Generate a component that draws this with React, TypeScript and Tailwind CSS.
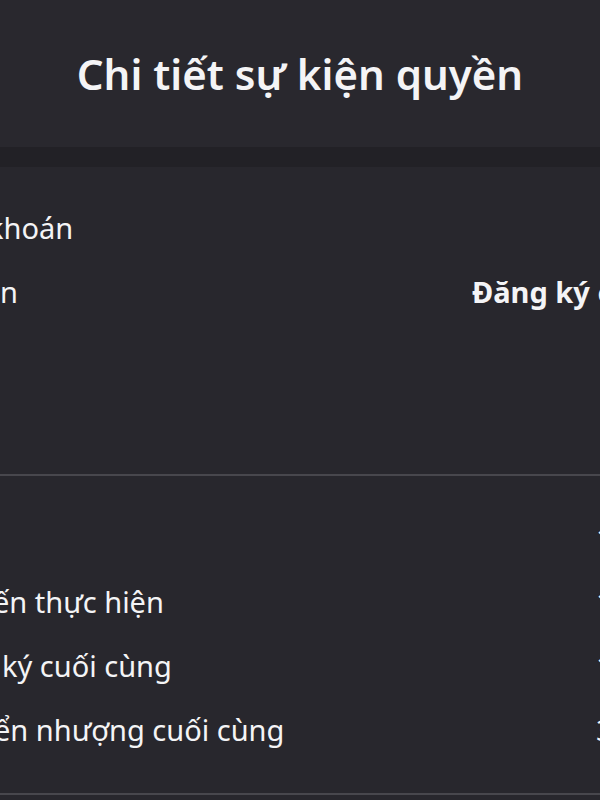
const topRows = [
  { label: "khoán", shift: "-ml-[12px]", value: "" },
  { label: "n", shift: "ml-0", value: "Đăng ký chứng khoán" },
];

const dateRows = [
  { label: "", shift: "ml-0", value: "14/06/2024" },
  { label: "ến thực hiện", shift: "-ml-[7px]", value: "12/07/2024" },
  { label: "ký cuối cùng", shift: "ml-[2px]", value: "15/06/2024" },
  { label: "ển nhượng cuối cùng", shift: "-ml-[6px]", value: "30/06/2024" },
];

const App = () => {
  return (
    <div className="w-full min-h-screen overflow-hidden bg-[#28272d] text-[#f4f4f6] font-['Noto_Sans',sans-serif]">
      {/* header */}
      <div className="h-[147px] bg-[#29282e] flex items-center justify-center">
        <h1 className="text-[42px] font-semibold whitespace-nowrap">
          Chi tiết sự kiện quyền
        </h1>
      </div>
      <div className="h-[20px] bg-[#222126]" />

      {/* account info */}
      <div className="pt-[29px] pb-[150px]">
        {topRows.map((row, i) => (
          <div
            className="h-16 grid grid-cols-[472px_1fr] items-center text-[29px] whitespace-nowrap"
            key={i}
          >
            <span className={row.shift}>{row.label}</span>
            <span className="font-bold overflow-hidden">{row.value}</span>
          </div>
        ))}
      </div>
      <div className="h-[2px] bg-[#48474d]" />

      {/* dates */}
      <div className="pt-[30px] pb-[31px]">
        {dateRows.map((row, i) => (
          <div
            className="h-16 grid grid-cols-[596px_1fr] items-center text-[29px] whitespace-nowrap"
            key={i}
          >
            <span className={row.shift}>{row.label}</span>
            <span className="overflow-hidden">{row.value}</span>
          </div>
        ))}
      </div>
      <div className="h-[2px] bg-[#48474d]" />
    </div>
  );
};

export default App;
